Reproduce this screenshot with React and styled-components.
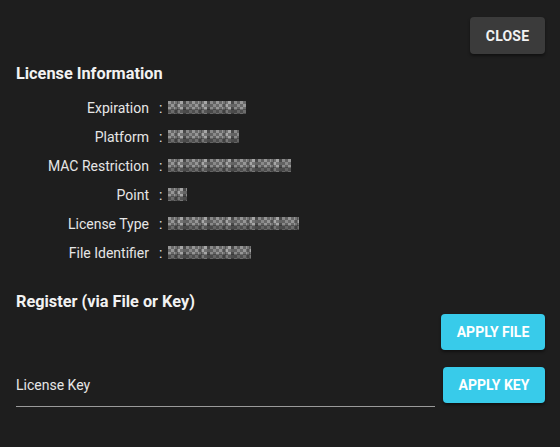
import React from 'react';
import styled, { createGlobalStyle } from 'styled-components';

const GlobalStyle = createGlobalStyle`
  html, body {
    margin: 0;
    padding: 0;
    background: #1e1e1e;
  }
  body {
    font-family: Roboto, "Liberation Sans", sans-serif;
    color: #e8e8e8;
  }
  * {
    box-sizing: border-box;
  }
`;

const Dialog = styled.div`
  width: 560px;
  height: 447px;
  background: #1e1e1e;
  padding: 17px 15px 0 16px;
  display: flex;
  flex-direction: column;
`;

const TopBar = styled.div`
  display: flex;
  justify-content: flex-end;
`;

const CloseButton = styled.button`
  width: 75px;
  height: 37px;
  border: none;
  border-radius: 4px;
  background: #3b3b3b;
  color: #f2f2f2;
  font-family: Roboto, "Liberation Sans", sans-serif;
  font-weight: 700;
  font-size: 14px;
  letter-spacing: 0.2px;
  box-shadow: 0 2px 3px rgba(0, 0, 0, 0.45);
  cursor: pointer;
`;

const SectionTitle = styled.h2`
  margin: ${(p) => p.$top || 0}px 0 0;
  font-size: 16.3px;
  line-height: 24px;
  font-weight: 700;
  color: #f2f2f2;
`;

const InfoList = styled.div`
  margin-top: 7px;
  display: flex;
  flex-direction: column;
`;

const InfoRow = styled.div`
  display: flex;
  align-items: center;
  height: 29px;
  font-size: 14px;
  color: #e6e6e6;
`;

const Label = styled.span`
  width: 133px;
  text-align: right;
`;

const Colon = styled.span`
  margin: 0 6px 0 10px;
`;

// obscured value, drawn as a grey mosaic like the blurred screenshot
const Redacted = styled.span`
  display: inline-block;
  width: ${(p) => p.$w}px;
  height: 13px;
  opacity: 0.8;
  background:
    conic-gradient(rgba(20, 20, 20, 0.35) 25%, transparent 0 50%, rgba(20, 20, 20, 0.35) 0 75%, transparent 0) 0 0 / 6px 6px,
    linear-gradient(180deg, transparent 0 65%, rgba(30, 30, 30, 0.35) 65% 100%),
    repeating-linear-gradient(90deg, #b4b4b4 0 7px, #8a8a8a 7px 10px, #c8c8c8 10px 15px, #767676 15px 18px, #a4a4a4 18px 24px);
`;

const RegisterArea = styled.div`
  display: flex;
  flex-direction: column;
`;

const ButtonRow = styled.div`
  display: flex;
  justify-content: flex-end;
`;

const KeyRow = styled.div`
  display: flex;
  align-items: flex-end;
  gap: 8px;
  margin-top: 15px;
`;

const KeyField = styled.label`
  flex: 1;
  height: 42px;
  display: flex;
  align-items: center;
  font-size: 14px;
  color: #e6e6e6;
  border-bottom: 1px solid #9a9a9a;
  margin-bottom: -4px;
  padding-bottom: 2px;
`;

const ActionButton = styled.button`
  width: ${(p) => p.$w}px;
  height: 36px;
  border: none;
  border-radius: 4px;
  background: #38cbea;
  color: #ffffff;
  font-family: Roboto, "Liberation Sans", sans-serif;
  font-weight: 700;
  font-size: 14px;
  box-shadow: 0 2px 3px rgba(0, 0, 0, 0.45);
  cursor: pointer;
`;

const info = [
  { label: 'Expiration', w: 78 },
  { label: 'Platform', w: 71 },
  { label: 'MAC Restriction', w: 123 },
  { label: 'Point', w: 19 },
  { label: 'License Type', w: 131 },
  { label: 'File Identifier', w: 83 },
];

export default function App() {
  return (
    <>
      <GlobalStyle />
      <Dialog>
        <TopBar>
          <CloseButton>CLOSE</CloseButton>
        </TopBar>
        <SectionTitle $top={8}>License Information</SectionTitle>
        <InfoList>
          {info.map((row) => (
            <InfoRow key={row.label}>
              <Label>{row.label}</Label>
              <Colon>:</Colon>
              <Redacted $w={row.w} />
            </InfoRow>
          ))}
        </InfoList>
        <SectionTitle $top={23}>Register (via File or Key)</SectionTitle>
        <RegisterArea>
          <ButtonRow>
            <ActionButton $w={104}>APPLY FILE</ActionButton>
          </ButtonRow>
          <KeyRow>
            <KeyField>License Key</KeyField>
            <ActionButton $w={102}>APPLY KEY</ActionButton>
          </KeyRow>
        </RegisterArea>
      </Dialog>
    </>
  );
}
